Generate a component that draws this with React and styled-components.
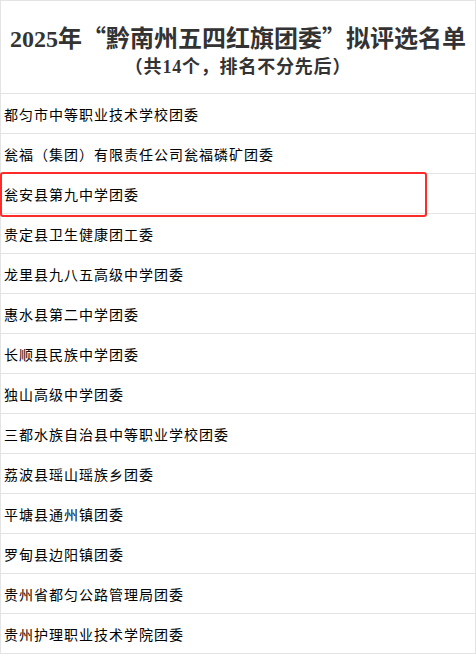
import React from 'react';
import styled, { createGlobalStyle } from 'styled-components';

const GlobalStyle = createGlobalStyle`
  html, body {
    margin: 0;
    padding: 0;
    background: #fff;
  }
`;

const Sheet = styled.div`
  position: relative;
  width: 474px;
  border: 1px solid #e4e4e4;
  border-bottom: none;
  font-family: "Noto Sans CJK SC", sans-serif;
`;

const Head = styled.div`
  height: 93px;
  border-bottom: 1px solid #e4e4e4;
  display: flex;
  flex-direction: column;
  align-items: center;
  padding-top: 21px;
  box-sizing: border-box;
  color: #333;
  font-family: "Noto Sans CJK SC", serif;
  font-weight: 700;
`;

const Title = styled.h1`
  margin: 0;
  font-size: 24px;
  line-height: 30px;
  font-weight: 700;
  white-space: nowrap;
`;

const Sub = styled.div`
  font-size: 18px;
  line-height: 22px;
  letter-spacing: 0.8px;
`;

const Num = styled.span`
  font-family: "Liberation Serif", serif;
  font-weight: 700;
`;

const Row = styled.div`
  height: 39px;
  border-bottom: 1px solid #e4e4e4;
  display: flex;
  align-items: center;
  padding-left: 3px;
  font-size: 14px;
  letter-spacing: 1px;
  color: #000;
`;

const Mark = styled.div`
  position: absolute;
  left: -1px;
  top: 171px;
  width: 427px;
  height: 45px;
  box-sizing: border-box;
  border: 2px solid #ff2b2b;
  border-radius: 3px;
`;

const names = [
  '都匀市中等职业技术学校团委',
  '瓮福（集团）有限责任公司瓮福磷矿团委',
  '瓮安县第九中学团委',
  '贵定县卫生健康团工委',
  '龙里县九八五高级中学团委',
  '惠水县第二中学团委',
  '长顺县民族中学团委',
  '独山高级中学团委',
  '三都水族自治县中等职业学校团委',
  '荔波县瑶山瑶族乡团委',
  '平塘县通州镇团委',
  '罗甸县边阳镇团委',
  '贵州省都匀公路管理局团委',
  '贵州护理职业技术学院团委',
];

const App = () => {
  return (
    <>
      <GlobalStyle />
      <Sheet>
        <Head>
          <Title>
            <Num>2025</Num>年“黔南州五四红旗团委”拟评选名单
          </Title>
          <Sub>
            （共<Num>14</Num>个，排名不分先后）
          </Sub>
        </Head>
        {names.map((n) => (
          <Row key={n}>{n}</Row>
        ))}
        <Mark />
      </Sheet>
    </>
  );
};

export default App;
